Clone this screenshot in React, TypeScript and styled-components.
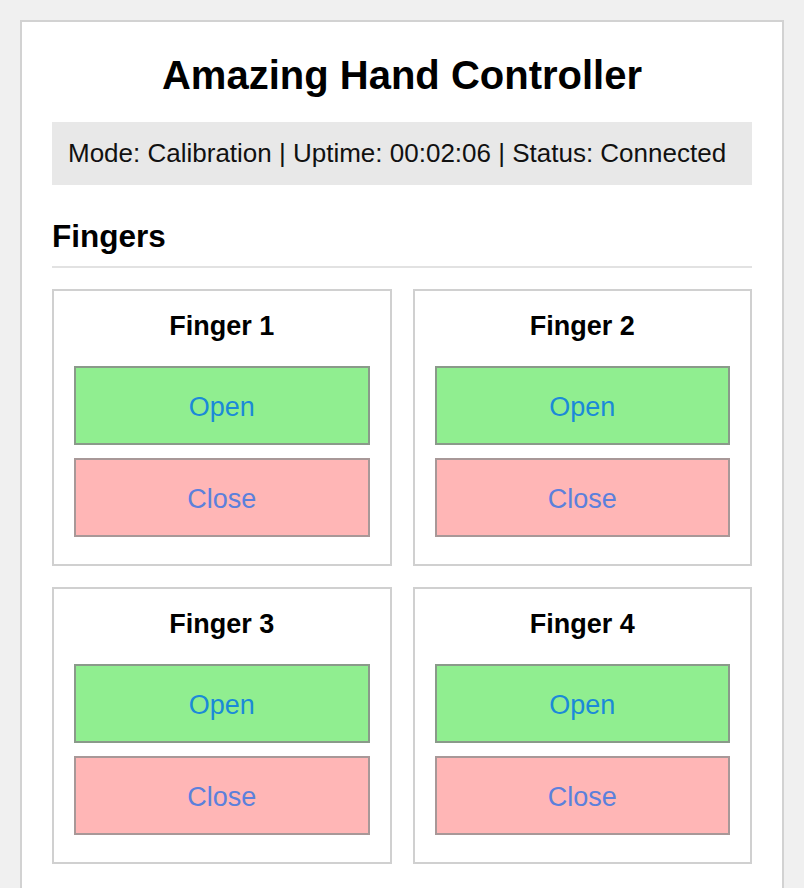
import React from 'react';
import styled, { createGlobalStyle } from 'styled-components';

const GlobalStyle = createGlobalStyle`
  html, body {
    margin: 0;
    padding: 0;
    background: #f0f0f0;
    font-family: "Liberation Sans", Arial, Helvetica, sans-serif;
  }
`;

const Page = styled.div`
  padding: 20px 20px 0 20px;
`;

const Panel = styled.div`
  background: #ffffff;
  border: 2px solid #d2d2d2;
  border-bottom: none;
  padding: 26px 30px 40px 30px;
  width: 700px;
`;

const Title = styled.h1`
  margin: 0 0 20px 0;
  text-align: center;
  font-size: 40px;
  line-height: 54px;
  font-weight: 700;
  color: #000;
`;

const StatusBar = styled.div`
  background: #e8e8e8;
  padding: 15px 16px;
  font-size: 26px;
  line-height: 33px;
  color: #111;
`;

const SectionTitle = styled.h2`
  margin: 33px 0 0 0;
  padding-bottom: 12px;
  border-bottom: 2px solid #e2e2e2;
  font-size: 31.5px;
  line-height: 36px;
  font-weight: 700;
  color: #000;
`;

const FingerGrid = styled.div`
  display: grid;
  grid-template-columns: 1fr 1fr;
  gap: 21px 21px;
  margin-top: 21px;
`;

const Card = styled.div`
  border: 2px solid #d0d0d0;
  padding: 16px 20px 27px 20px;
  display: flex;
  flex-direction: column;
  gap: 13px;
`;

const CardTitle = styled.h3`
  margin: 0 0 8px 0;
  text-align: center;
  font-size: 27px;
  line-height: 38px;
  font-weight: 700;
  color: #000;
`;

const ActionButton = styled.button<{ $kind: 'open' | 'close' }>`
  height: 79px;
  padding: 3px 0 0 0;
  border: 2px solid ${(p) => (p.$kind === 'open' ? '#8a9a8a' : '#a89898')};
  background: ${(p) => (p.$kind === 'open' ? '#90ee90' : '#ffb6b6')};
  color: ${(p) => (p.$kind === 'open' ? '#1b8ad8' : '#5b80dc')};
  font-family: "Liberation Sans", Arial, Helvetica, sans-serif;
  font-size: 27px;
  cursor: pointer;
`;

const fingers = [1, 2, 3, 4];

export default function App() {
  return (
    <>
      <GlobalStyle />
      <Page>
        <Panel>
          <Title>Amazing Hand Controller</Title>
          <StatusBar>Mode: Calibration | Uptime: 00:02:06 | Status: Connected</StatusBar>
          <SectionTitle>Fingers</SectionTitle>
          <FingerGrid>
            {fingers.map((n) => (
              <Card key={n}>
                <CardTitle>Finger {n}</CardTitle>
                <ActionButton $kind="open">Open</ActionButton>
                <ActionButton $kind="close">Close</ActionButton>
              </Card>
            ))}
          </FingerGrid>
        </Panel>
      </Page>
    </>
  );
}
